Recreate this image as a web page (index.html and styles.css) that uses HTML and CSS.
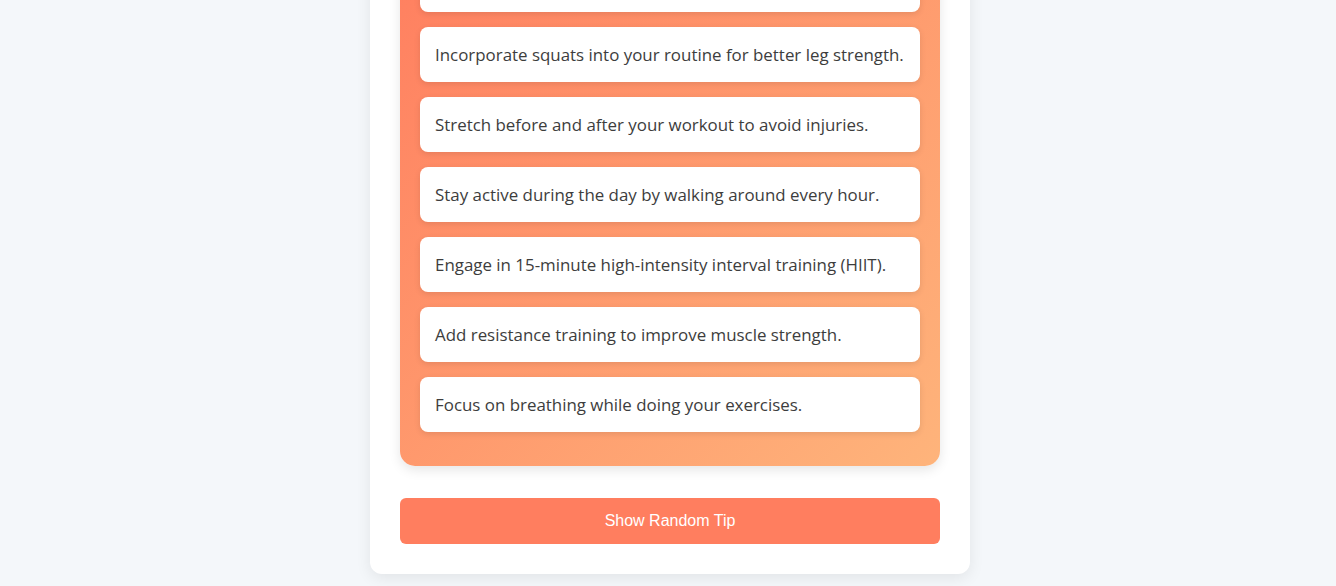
FILE: index.html
```html
<!DOCTYPE html>
<html lang="en">
<head>
<meta charset="utf-8">
<title>Fitness Tips</title>
<link rel="stylesheet" href="styles.css">
</head>
<body>
<div class="card">
  <div class="panel">
    <ul class="tips">
      <li class="tip">Drink plenty of water before, during and after exercise.</li>
      <li class="tip">Incorporate squats into your routine for better leg strength.</li>
      <li class="tip">Stretch before and after your workout to avoid injuries.</li>
      <li class="tip">Stay active during the day by walking around every hour.</li>
      <li class="tip">Engage in 15-minute high-intensity interval training (HIIT).</li>
      <li class="tip">Add resistance training to improve muscle strength.</li>
      <li class="tip">Focus on breathing while doing your exercises.</li>
    </ul>
  </div>
  <button class="btn">Show Random Tip</button>
</div>
</body>
</html>
```
FILE: styles.css
```css
html, body {
  margin: 0;
  padding: 0;
}
body {
  height: 586px;
  box-sizing: border-box;
  overflow: hidden;
  background: #f4f7fa;
  display: flex;
  flex-direction: column;
  justify-content: flex-end;
  align-items: center;
  padding-bottom: 12px;
  padding-left: 4px;
  font-family: "Open Sans", sans-serif;
}
.card {
  width: 600px;
  box-sizing: border-box;
  background: #fff;
  border-radius: 12px;
  padding: 30px;
  box-shadow: 0 4px 15px rgba(0, 0, 0, 0.08);
  flex-shrink: 0;
}
.panel {
  background: linear-gradient(135deg, #ff7e5f, #feb47b);
  border-radius: 15px;
  padding: 20px 20px 34px;
  box-shadow: 0 4px 12px rgba(0, 0, 0, 0.1);
}
.tips {
  list-style: none;
  margin: 0;
  padding: 0;
  display: flex;
  flex-direction: column;
  gap: 15px;
}
.tip {
  background: #fff;
  border-radius: 8px;
  height: 55px;
  box-sizing: border-box;
  padding: 0 15px;
  display: flex;
  align-items: center;
  color: #3d3d3d;
  font-size: 16.9px;
  box-shadow: 0 2px 6px rgba(0, 0, 0, 0.1);
}
.btn {
  display: block;
  width: 100%;
  margin-top: 32px;
  height: 46px;
  border: none;
  border-radius: 6px;
  background: #ff7e5f;
  color: #fff;
  font-family: "Liberation Sans", Arial, sans-serif;
  font-size: 16px;
  cursor: pointer;
}
```
